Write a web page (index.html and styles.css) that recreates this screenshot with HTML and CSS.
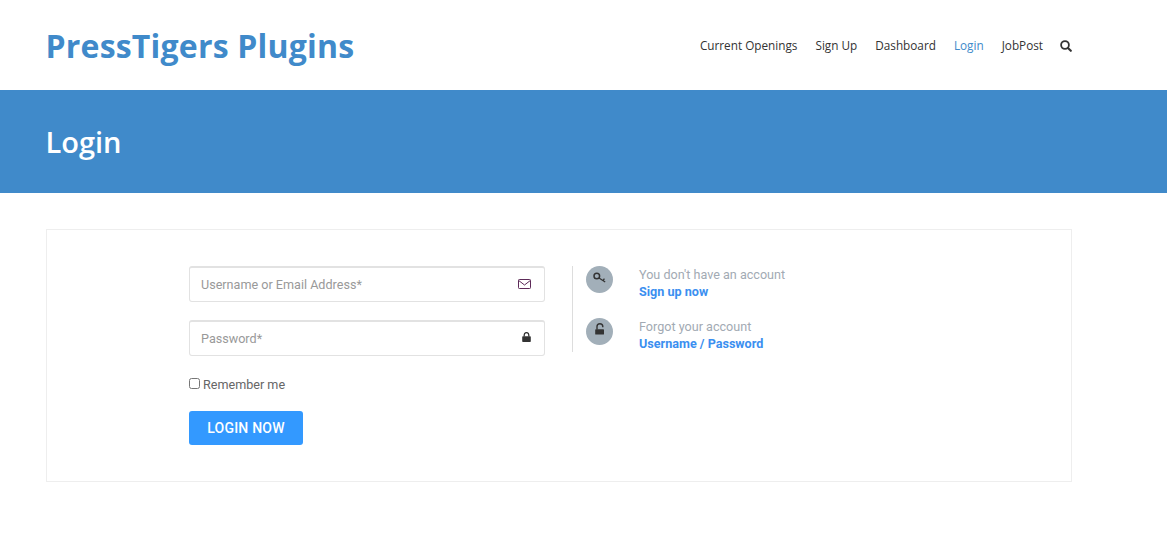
FILE: index.html
```html
<!DOCTYPE html>
<html lang="en">
<head>
<meta charset="utf-8">
<title>Login</title>
<link rel="stylesheet" href="styles.css">
</head>
<body>
<header class="site-header">
  <a class="brand" href="#">PressTigers Plugins</a>
  <nav class="nav">
    <a href="#">Current Openings</a>
    <a href="#">Sign Up</a>
    <a href="#">Dashboard</a>
    <a class="active" href="#">Login</a>
    <a href="#">JobPost</a>
    <a class="search" href="#" aria-label="Search"><svg width="12" height="12" viewBox="0 0 12 12"><circle cx="5" cy="5" r="3.9" fill="none" stroke="#333" stroke-width="1.8"/><path d="M8 8 10.8 10.8" stroke="#333" stroke-width="2.1" stroke-linecap="round"/></svg></a>
  </nav>
</header>
<section class="banner"><h1>Login</h1></section>
<main class="main">
  <div class="card">
    <form class="form">
      <div class="field">
        <input type="text" placeholder="Username or Email Address*">
        <svg class="field-icon" width="13" height="10" viewBox="0 0 13 10"><rect x=".5" y=".5" width="12" height="9" rx=".8" fill="none" stroke="#5d2a58"/><path d="M.8 1.6 6.5 6l5.7-4.4" fill="none" stroke="#5d2a58"/></svg>
      </div>
      <div class="field">
        <input type="password" placeholder="Password*">
        <svg class="field-icon lock" width="9" height="10" viewBox="0 0 9 10"><path d="M2.2 4.5V2.9a2.3 2.3 0 0 1 4.6 0v1.6" fill="none" stroke="#333" stroke-width="1.3"/><rect y="4.2" x=".2" width="8.6" height="5.8" rx=".8" fill="#333"/></svg>
      </div>
      <label class="remember"><input type="checkbox"><span>Remember me</span></label>
      <button class="submit" type="button">LOGIN NOW</button>
    </form>
    <aside class="side">
      <div class="side-item">
        <svg class="badge" width="27" height="27" viewBox="0 0 27 27"><circle cx="13.5" cy="13.5" r="13.5" fill="#a2afb9"/><circle cx="10.8" cy="10" r="2.8" fill="none" stroke="#333" stroke-width="1.5"/><path d="M13 12 19.2 16M17 14.6 18.4 12.6" fill="none" stroke="#333" stroke-width="1.3"/></svg>
        <p class="side-text">You don't have an account<a href="#">Sign up now</a></p>
      </div>
      <div class="side-item">
        <svg class="badge" width="27" height="27" viewBox="0 0 27 27"><circle cx="13.5" cy="13.5" r="13.5" fill="#a2afb9"/><path d="M11 11.5V8.6a2.9 2.9 0 0 1 5.8 0v.6" fill="none" stroke="#333" stroke-width="1.4"/><rect x="9.2" y="11.2" width="8.8" height="5.4" rx=".7" fill="#333"/></svg>
        <p class="side-text">Forgot your account<a href="#">Username / Password</a></p>
      </div>
    </aside>
  </div>
</main>
</body>
</html>
```

FILE: styles.css
```css
* { box-sizing: border-box; }
html, body { margin: 0; padding: 0; }
body { background: #fff; font-family: Roboto, "Liberation Sans", sans-serif; color: #666; }
a { text-decoration: none; }

.site-header {
  display: flex;
  align-items: center;
  justify-content: space-between;
  height: 90px;
  margin: 0 95px 0 46px;
  padding-top: 2px;
}
.brand {
  margin-left: -0.5px;
  font-family: "Open Sans", sans-serif;
  font-weight: 700;
  font-size: 32px;
  letter-spacing: 0.2px;
  line-height: 44px;
  color: #408aca;
}
.nav { display: flex; align-items: center; gap: 18px; margin-top: -2px; }
.nav a {
  font-family: "Open Sans", sans-serif;
  font-size: 11.75px;
  line-height: 16px;
  color: #333;
}
.nav a.active { color: #408aca; }
.nav .search { display: flex; margin: 2px 0 0 -1px; }

.banner {
  display: flex;
  align-items: center;
  height: 103px;
  padding: 1px 46px 0;
  background: #408aca;
}
.banner h1 {
  margin: 0 0 0 -0.5px;
  font-family: "Open Sans", sans-serif;
  font-weight: 600;
  font-size: 29px;
  line-height: 40px;
  color: #fff;
}

.main { padding: 36px 95px 0 46px; }
.card {
  display: flex;
  align-items: flex-start;
  height: 253px;
  padding: 36px 142px 0;
  border: 1px solid #eee;
}
.form { width: 356px; flex: none; }
.field { position: relative; height: 36px; margin-bottom: 18px; }
.field input {
  display: block;
  width: 100%;
  height: 36px;
  padding: 0 40px 0 11px;
  border: 1px solid #e2e2e2;
  border-top-width: 2px;
  border-radius: 3px;
  outline: 0;
  font-family: Roboto, sans-serif;
  font-size: 12.6px;
  color: #666;
}
.field input::placeholder { color: #999; opacity: 1; }
.field-icon { position: absolute; right: 14px; top: 13px; }
.field-icon.lock { right: 14px; top: 12px; }

.remember {
  display: flex;
  align-items: center;
  height: 20px;
  padding-top: 1px;
  font-size: 12.6px;
  line-height: 20px;
  color: #666;
}
.remember input { width: 11px; height: 11px; margin: -2px 3px 0 0; }
.submit {
  display: block;
  width: 114px;
  height: 34px;
  margin-top: 17px;
  padding: 0;
  border: 0;
  border-radius: 3px;
  background: #3399ff;
  color: #fff;
  font-family: Roboto, sans-serif;
  font-weight: 500;
  font-size: 14px;
  letter-spacing: 0.2px;
}

.side {
  height: 86px;
  margin-left: 27px;
  padding-left: 13px;
  border-left: 1px solid #ddd;
}
.side-item { display: flex; align-items: flex-start; height: 52px; }
.badge {
  display: block;
  flex: none;
  margin-right: 26px;
}
.side-text {
  margin: 0;
  font-size: 12.6px;
  line-height: 17px;
  color: #a2aab3;
}
.side-text a {
  display: block;
  font-weight: 700;
  color: #3b8ff0;
}
```
